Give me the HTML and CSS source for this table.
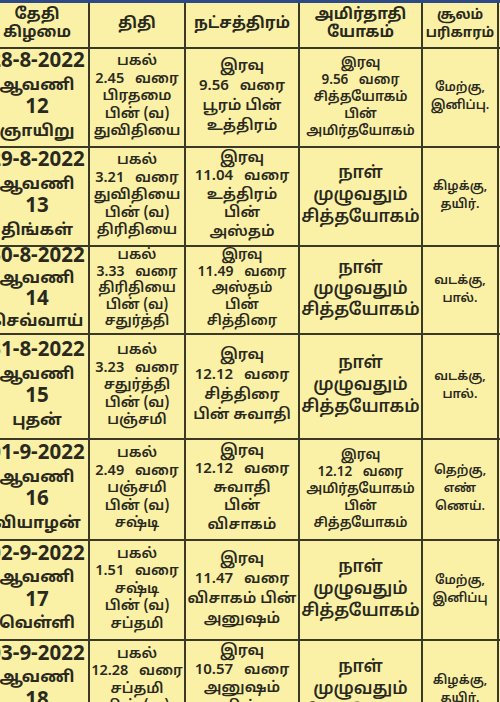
FILE: index.html
```html
<!DOCTYPE html>
<html lang="ta">
<head>
<meta charset="utf-8">
<title>ஆவணி பஞ்சாங்கம்</title>
<link rel="stylesheet" href="styles.css">
</head>
<body>
<div class="sheet">
<table class="cal">
<colgroup>
<col class="c-date"><col class="c-tithi"><col class="c-nak"><col class="c-yog"><col class="c-sool"><col class="c-extra">
</colgroup>
<thead>
<tr class="r-head">
<th>தேதி<br>கிழமை</th>
<th>திதி</th>
<th>நட்சத்திரம்</th>
<th>அமிர்தாதி<br>யோகம்</th>
<th class="small-head">சூலம்<br>பரிகாரம்</th>
<th></th>
</tr>
</thead>
<tbody>
<tr class="r1">
<td class="date"><span class="num">28-8-2022</span><br>ஆவணி<br><span class="num">12</span><br>ஞாயிறு</td>
<td>பகல்<br><span class="sp">2.45 வரை</span><br>பிரதமை<br>பின் (வ)<br>துவிதியை</td>
<td class="nak n4">இரவு<br><span class="sp">9.56 வரை</span><br>பூரம் பின்<br>உத்திரம்</td>
<td class="yog-s">இரவு<br><span class="sp">9.56 வரை</span><br>சித்தயோகம்<br>பின்<br>அமிர்தயோகம்</td>
<td class="sool">மேற்கு,<br>இனிப்பு.</td>
<td></td>
</tr>
<tr class="r2">
<td class="date"><span class="num">29-8-2022</span><br>ஆவணி<br><span class="num">13</span><br>திங்கள்</td>
<td>பகல்<br><span class="sp">3.21 வரை</span><br>துவிதியை<br>பின் (வ)<br>திரிதியை</td>
<td class="nak n5">இரவு<br><span class="sp">11.04 வரை</span><br>உத்திரம்<br>பின்<br>அஸ்தம்</td>
<td class="yog-l">நாள்<br>முழுவதும்<br>சித்தயோகம்</td>
<td class="sool">கிழக்கு,<br>தயிர்.</td>
<td></td>
</tr>
<tr class="r3">
<td class="date"><span class="num">30-8-2022</span><br>ஆவணி<br><span class="num">14</span><br>செவ்வாய்</td>
<td>பகல்<br><span class="sp">3.33 வரை</span><br>திரிதியை<br>பின் (வ)<br>சதுர்த்தி</td>
<td class="nak">இரவு<br><span class="sp">11.49 வரை</span><br>அஸ்தம்<br>பின்<br>சித்திரை</td>
<td class="yog-l">நாள்<br>முழுவதும்<br>சித்தயோகம்</td>
<td class="sool">வடக்கு,<br>பால்.</td>
<td></td>
</tr>
<tr class="r4">
<td class="date"><span class="num">31-8-2022</span><br>ஆவணி<br><span class="num">15</span><br>புதன்</td>
<td>பகல்<br><span class="sp">3.23 வரை</span><br>சதுர்த்தி<br>பின் (வ)<br>பஞ்சமி</td>
<td class="nak n4">இரவு<br><span class="sp">12.12 வரை</span><br>சித்திரை<br>பின் சுவாதி</td>
<td class="yog-l">நாள்<br>முழுவதும்<br>சித்தயோகம்</td>
<td class="sool">வடக்கு,<br>பால்.</td>
<td></td>
</tr>
<tr class="r5">
<td class="date"><span class="num">01-9-2022</span><br>ஆவணி<br><span class="num">16</span><br>வியாழன்</td>
<td>பகல்<br><span class="sp">2.49 வரை</span><br>பஞ்சமி<br>பின் (வ)<br>சஷ்டி</td>
<td class="nak n5">இரவு<br><span class="sp">12.12 வரை</span><br>சுவாதி<br>பின்<br>விசாகம்</td>
<td class="yog-s">இரவு<br><span class="sp">12.12 வரை</span><br>அமிர்தயோகம்<br>பின்<br>சித்தயோகம்</td>
<td class="sool">தெற்கு,<br>எண்<br>ணெய்.</td>
<td></td>
</tr>
<tr class="r6">
<td class="date"><span class="num">02-9-2022</span><br>ஆவணி<br><span class="num">17</span><br>வெள்ளி</td>
<td>பகல்<br><span class="sp">1.51 வரை</span><br>சஷ்டி<br>பின் (வ)<br>சப்தமி</td>
<td class="nak n4">இரவு<br><span class="sp">11.47 வரை</span><br>விசாகம் பின்<br>அனுஷம்</td>
<td class="yog-l">நாள்<br>முழுவதும்<br>சித்தயோகம்</td>
<td class="sool">மேற்கு,<br>இனிப்பு</td>
<td></td>
</tr>
<tr class="r7">
<td class="date"><span class="num">03-9-2022</span><br>ஆவணி<br><span class="num">18</span><br>சனி</td>
<td>பகல்<br><span class="sp">12.28 வரை</span><br>சப்தமி<br>பின் (வ)<br>அஷ்டமி</td>
<td class="nak n5">இரவு<br><span class="sp">10.57 வரை</span><br>அனுஷம்<br>பின்<br>கேட்டை</td>
<td class="yog-l">நாள்<br>முழுவதும்<br>சித்தயோகம்</td>
<td class="sool">கிழக்கு,<br>தயிர்.</td>
<td></td>
</tr>
</tbody>
</table>
</div>
</body>
</html>
```

FILE: styles.css
```css
html, body {
  margin: 0;
  padding: 0;
  background: #fbf1a6;
}
.sheet {
  width: 500px;
  height: 702px;
  overflow: hidden;
  background: #fbf1a6;
}
.cal {
  margin-left: -16px;
  width: 592px;
  table-layout: fixed;
  border-collapse: collapse;
  border-top: 3px solid #2d4a86;
  font-family: "Noto Sans Tamil", "Lohit Tamil", "Noto Sans", "Liberation Sans", sans-serif;
  color: #29291d;
  text-align: center;
}
.c-date { width: 104px; }
.c-tithi { width: 96px; }
.c-nak { width: 114px; }
.c-yog { width: 123px; }
.c-sool { width: 76px; }
.c-extra { width: 79px; }
.cal th, .cal td {
  border: 2px solid #3a3826;
  padding: 0;
  vertical-align: middle;
  overflow: hidden;
  white-space: nowrap;
}
.cal th {
  font-size: 15.5px;
  line-height: 18px;
  font-weight: 700;
}
.cal td {
  font-size: 14.5px;
  line-height: 17.5px;
  font-weight: 600;
}
.cal th.small-head { font-size: 13.5px; }
.cal td.date {
  font-size: 16px;
  line-height: 22.5px;
  font-weight: 700;
}
.cal td.date .num { font-size: 20.5px; }
.cal td.nak { font-size: 15px; }
.cal td.nak.n4 { line-height: 20px; }
.cal td.nak.n5 { line-height: 18.5px; }
.cal td.yog-s { font-size: 13.5px; line-height: 17px; }
.cal td.yog-l { font-size: 17px; line-height: 22px; }
.cal td.sool { font-size: 12.5px; line-height: 18px; }
.sp { word-spacing: 7px; }
.r-head { height: 46px; }
.r1 { height: 99px; }
.r2 { height: 99px; }
.r3 { height: 88px; }
.r3 td { font-size: 14px; line-height: 16.5px; }
.r3 td.nak { font-size: 14px; line-height: 16.5px; }
.r3 td.date { font-size: 16px; line-height: 21px; }
.r3 td.yog-l { font-size: 17px; line-height: 21px; }
.r3 td.sool { font-size: 12.5px; line-height: 18px; }
.r4 { height: 105px; }
.r5 { height: 101px; }
.r6 { height: 100px; }
.r7 { height: 100px; }
```
